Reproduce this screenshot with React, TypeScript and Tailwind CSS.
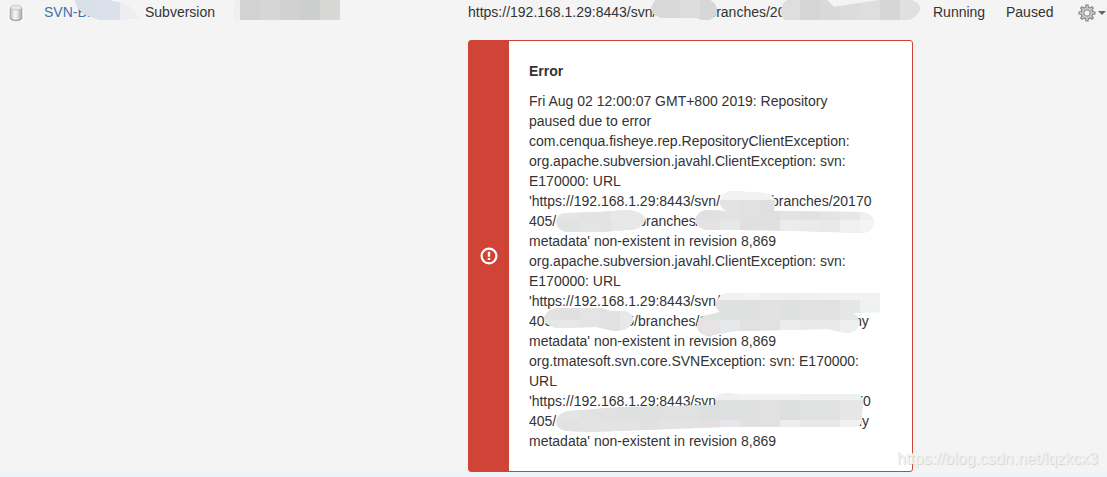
import React from "react";

type Block = [x: number, y: number, fill: string, w?: number, h?: number];

function Smudge({ id, path, base, blocks }: { id: string; path: string; base: string; blocks: Block[] }) {
  return (
    <g>
      <clipPath id={id}>
        <path d={path} />
      </clipPath>
      <path d={path} fill={base} />
      <g clipPath={`url(#${id})`} shapeRendering="crispEdges">
        {blocks.map(([x, y, fill, w = 20, h = 20], i) => (
          <rect key={i} x={x} y={y} width={w} height={h} fill={fill} />
        ))}
      </g>
    </g>
  );
}

function RepositoryIcon() {
  return (
    <svg viewBox="0 0 16 18" className="block h-[18px] w-4" role="img" aria-label="Repository">
      <defs>
        <linearGradient id="can">
          <stop offset="0" stopColor="#b0b0b0" />
          <stop offset=".3" stopColor="#ececec" />
          <stop offset=".5" stopColor="#f4f4f4" />
          <stop offset=".75" stopColor="#cdcdcd" />
          <stop offset="1" stopColor="#a6a6a6" />
        </linearGradient>
      </defs>
      <rect y="1" width="16" height="16" fill="#fafafa" />
      <path d="M2 3.500v10.500c0 1.600 2.700 2.600 6 2.600s6-1 6-2.600V3.500z" fill="url(#can)" stroke="#adadad" strokeWidth=".7" />
      <path d="M2.200 14.300c.6 1.300 3 2 5.800 2s5.200-.7 5.800-2" fill="none" stroke="#8c8c8c" strokeWidth=".8" />
      <ellipse cx="8" cy="3.600" rx="6" ry="2.400" fill="#e6e6e6" stroke="#bbb" strokeWidth=".7" />
    </svg>
  );
}

function GearIcon() {
  const teeth = [0, 45, 90, 135, 180, 225, 270, 315];
  return (
    <svg viewBox="0 0 18 18" className="h-[18px] w-[18px]" aria-hidden="true">
      <g fill="#7d7d7d">
        {teeth.map((a) => (
          <path key={a} d="M6.900 5L7.500.5h3L11.100 5z" transform={`rotate(${a} 9 9)`} />
        ))}
        <circle cx="9" cy="9" r="6.300" />
      </g>
      <g fill="#c6c6c6">
        {teeth.map((a) => (
          <path key={a} d="M7.800 5L8.300 1.500h1.400L10.200 5z" transform={`rotate(${a} 9 9)`} />
        ))}
        <circle cx="9" cy="9" r="5.400" />
      </g>
      <circle cx="9" cy="9" r="3.100" fill="#f4f4f4" stroke="#858585" strokeWidth=".9" />
    </svg>
  );
}

const Line = ({ children }: { children: React.ReactNode }) => (
  <span className="block whitespace-nowrap">{children}</span>
);

const SVN = "'https://192.168.1.29:8443/svn/";

function ErrorMessage() {
  return (
    <section className="flex rounded-[3px] border border-[#d04437] bg-white" role="alert">
      <div className="flex w-10 shrink-0 items-center justify-center bg-[#d04437]">
        <svg viewBox="0 0 18 18" className="h-[18px] w-[18px]" aria-hidden="true">
          <circle cx="9" cy="9" r="7.400" fill="none" stroke="#fff" strokeWidth="2.200" />
          <path d="M9 4.800v5M9 11v2" stroke="#fff" strokeWidth="2.400" />
        </svg>
      </div>
      <div className="min-w-0 flex-1 p-5">
        <h2 className="font-bold">Error</h2>
        <div className="relative mt-[10px]">
          <p>
            <Line>Fri Aug 02 12:00:07 GMT+800 2019: Repository</Line>
            <Line>paused due to error</Line>
            <Line>com.cenqua.fisheye.rep.RepositoryClientException:</Line>
            <Line>org.apache.subversion.javahl.ClientException: svn:</Line>
            <Line>E170000: URL</Line>
            <Line>{SVN}<span className="inline-block w-[51px]" />branches/20170</Line>
            <Line>405/<span className="inline-block w-[82px]" />branches/</Line>
            <Line>metadata' non-existent in revision 8,869</Line>
            <Line>org.apache.subversion.javahl.ClientException: svn:</Line>
            <Line>E170000: URL</Line>
            <Line>{SVN}</Line>
            <Line>405/<span className="inline-block w-[70px]" />5/branches/2<span className="inline-block w-[143px]" />my</Line>
            <Line>metadata' non-existent in revision 8,869</Line>
            <Line>org.tmatesoft.svn.core.SVNException: svn: E170000:</Line>
            <Line>URL</Line>
            <Line>{SVN.slice(0, -1)}<span className="inline-block w-[139px]" />70</Line>
            <Line>405/<span className="inline-block w-[294px]" />my</Line>
            <Line>metadata' non-existent in revision 8,869</Line>
          </p>
          <svg viewBox="529 91 360 360" className="pointer-events-none absolute left-0 top-0 h-[360px] w-[360px]" aria-hidden="true">
            <Smudge id="m1" base="#e4e4e4"
              path="M720 202Q722 191 733 191L765 193Q776 196 775 203L774 211L861 212Q873 213 874 222Q873 232 862 233L800 231L740 230L708 230Q697 229 695 220Q698 210 708 210L727 211Q720 208 720 202z"
              blocks={[[715, 180, "#f1f2f2", 65], [720, 200, "#e3e3e3"], [740, 200, "#e1e1e1"], [760, 200, "#dfdfdf"], [690, 200, "#e0e0e0", 30], [780, 200, "#e3e3e3"], [800, 200, "#e1e1e1"], [820, 200, "#e4e4e4"], [840, 200, "#e7e7e7"], [860, 200, "#efefef"], [690, 220, "#e4e3e2", 30], [720, 220, "#e5e8e9"], [740, 220, "#e1e0e0", 40], [780, 220, "#ececed"], [800, 220, "#e9eaea"], [820, 220, "#e8e9e9"], [840, 220, "#eff0f0"], [860, 220, "#f3f4f4"]]} />
            <Smudge id="m2" base="#e4e4e4"
              path="M556 222Q557 212 568 213L600 212L626 210Q644 211 645 220Q643 230 628 230L600 232L567 232Q557 230 556 222z"
              blocks={[[550, 200, "#e5e5e5", 30], [580, 200, "#e3e3e3", 30], [610, 200, "#e8e8e8", 40], [550, 220, "#e1e2e2", 30], [580, 220, "#e4e4e4"], [600, 220, "#e3e3e3", 12], [612, 220, "#e8e8e8", 40]]} />
            <Smudge id="m3" base="#e5e5e5"
              path="M716 305Q718 293 730 293H880V312L853 313Q860 317 859 324Q857 333 846 333L828 329L735 331L708 336Q698 334 697 326Q698 316 708 315L720 312Q716 309 716 305z"
              blocks={[[710, 280, "#f0f1f1", 30], [740, 280, "#f3f3f3", 20], [760, 280, "#f0f0f0", 60], [820, 280, "#f2f2f2", 60], [700, 300, "#e0e2e2"], [720, 300, "#dfe0e0", 40], [760, 300, "#e2e2e1"], [780, 300, "#dfe0e0"], [800, 300, "#e1e1e2", 40], [840, 300, "#e5e6e6"], [860, 300, "#f0f1f1"], [695, 320, "#e5e3e3", 25], [720, 320, "#e5e7ea"], [740, 320, "#e2e1e0", 40], [780, 320, "#ebecec"], [800, 320, "#e8e9e9", 40], [840, 320, "#eef0ef"]]} />
            <Smudge id="m4" base="#e5e5e5"
              path="M544 318Q547 308 560 308L602 308L610 311L625 311Q633 313 633 321Q630 331 614 331L596 327L557 328Q546 326 544 318z"
              blocks={[[540, 300, "#e2e2e2"], [560, 300, "#e0e0e0"], [580, 300, "#e4e4e4"], [600, 300, "#e2e2e2"], [620, 300, "#e8e8e8"], [540, 320, "#e5e6e6"], [560, 320, "#e7e7e7"], [580, 320, "#e4e4e4"], [600, 320, "#e1e1e1"], [620, 320, "#e8e8e8"]]} />
            <Smudge id="m5" base="#e2e2e2"
              path="M556 421Q558 412 570 411L620 407L716 405V398Q718 393 728 393L735 394H860L863 401L861 424L855 427L724 427L590 432L567 431Q556 429 556 421z"
              blocks={[[710, 380, "#eff0f0", 30], [740, 380, "#f1f2f2", 60], [800, 380, "#eff0f0", 65], [550, 400, "#e4e4e4", 30], [580, 400, "#e2e2e2"], [600, 400, "#e1e1e1"], [620, 400, "#dfe0e0", 40], [660, 400, "#e1e1e1", 40], [700, 400, "#dddede"], [720, 400, "#dfe0e0", 40], [760, 400, "#e1e1e1"], [780, 400, "#dddede"], [800, 400, "#e0e1e1", 40], [840, 400, "#e6e6e6", 25], [550, 420, "#e1e2e2", 30], [580, 420, "#e3e3e3", 60], [640, 420, "#e2e0e0"], [660, 420, "#e3e3e3", 40], [700, 420, "#e3e0df"], [720, 420, "#e5e7ea"], [740, 420, "#e2e1e0"], [760, 420, "#e1e1e1"], [780, 420, "#ededed"], [800, 420, "#e7e8e8", 40], [840, 420, "#f0f1f1", 25]]} />
          </svg>
        </div>
      </div>
    </section>
  );
}

export default function App() {
  return (
    <main className="relative flex min-h-screen flex-col overflow-hidden bg-[#ebf2f9] font-['Liberation_Sans',Arial,sans-serif] text-sm leading-5 text-[#333]">
      <table className="w-full table-fixed border-collapse bg-[#f4f4f4] text-left">
        <colgroup>
          <col className="w-11" />
          <col className="w-[101px]" />
          <col className="w-[94px]" />
          <col className="w-[229px]" />
          <col />
          <col className="w-[73px]" />
          <col className="w-[72px]" />
          <col className="w-[29px]" />
        </colgroup>
        <tbody className="align-top">
          <tr className="whitespace-nowrap">
            <td className="pl-2 pt-1"><RepositoryIcon /></td>
            <td className="relative pt-0.5">
              <a href="#repository" className="text-[#3b73af]">SVN-BE</a>
              <svg viewBox="44 0 100 22" className="pointer-events-none absolute left-0 top-0 h-[22px] w-[100px]" aria-hidden="true">
                <Smudge id="h1" base="#dde2e9" path="M75 0H108L122 3Q136 9 138 18L120 20L100 20L88 16Q76 10 75 0z"
                  blocks={[[70, 0, "#dae0e8", 30], [100, 0, "#dbe1ea"], [120, 0, "#eceef0"]]} />
              </svg>
            </td>
            <td className="pt-0.5">Subversion</td>
            <td>
              <svg viewBox="234 0 110 22" className="-ml-[5px] block h-[22px] w-[110px]" role="img" aria-label="Hidden">
                <Smudge id="h2" base="#d1d1d1" path="M237 0H340V19L338 20H236L233 14z"
                  blocks={[[230, 0, "#f0f0f0", 10], [240, 0, "#d1d2d1"], [260, 0, "#d6d6d5"], [280, 0, "#d0d1d0"], [300, 0, "#cdcfcf"], [320, 0, "#d7d7d6"]]} />
              </svg>
            </td>
            <td className="relative pt-0.5">
              https://192.168.1.29:8443/svn/<span className="inline-block w-[52px]" />branches/20
              <svg viewBox="468 0 460 22" className="pointer-events-none absolute left-0 top-0 h-[22px] w-[460px]" aria-hidden="true">
                <Smudge id="h3" base="#dadada" path="M655 0H710Q717 4 717 11Q715 20 706 20Q700 20 697 18H663Q652 16 651 8z"
                  blocks={[[650, 0, "#d8d8d8", 30], [680, 0, "#dddddd"], [700, 0, "#d7d7d7"]]} />
                <Smudge id="h4" base="#dedede" path="M787 0H827L834 7L880 0H912Q920 3 920 9Q917 18 907 20H785Q780 16 781 11Q781 5 787 0z"
                  blocks={[[780, 0, "#dedede"], [800, 0, "#d5d5d5"], [820, 0, "#d9d9d9", 20], [840, 0, "#dcdcdc"], [860, 0, "#dedede"], [880, 0, "#d6d6d6"], [900, 0, "#e0e0e0"]]} />
              </svg>
            </td>
            <td className="pt-0.5">Running</td>
            <td className="pt-0.5">Paused</td>
            <td className="pt-1">
              <button type="button" aria-label="Repository actions" className="flex items-center gap-0.5">
                <GearIcon />
                <svg viewBox="0 0 8 4" className="h-1 w-2" aria-hidden="true"><path d="M0 0h8L4 4z" fill="#666" /></svg>
              </button>
            </td>
          </tr>
          <tr>
            <td colSpan={4} />
            <td className="pb-px pr-5 pt-[18px]"><ErrorMessage /></td>
            <td colSpan={3} />
          </tr>
        </tbody>
      </table>
      <span className="absolute bottom-2 right-[9px] text-base leading-5 text-[#f1f1f1] [text-shadow:1px_1px_1px_#d2d2d2]">
        https://blog.csdn.net/lqzkcx3
      </span>
    </main>
  );
}
